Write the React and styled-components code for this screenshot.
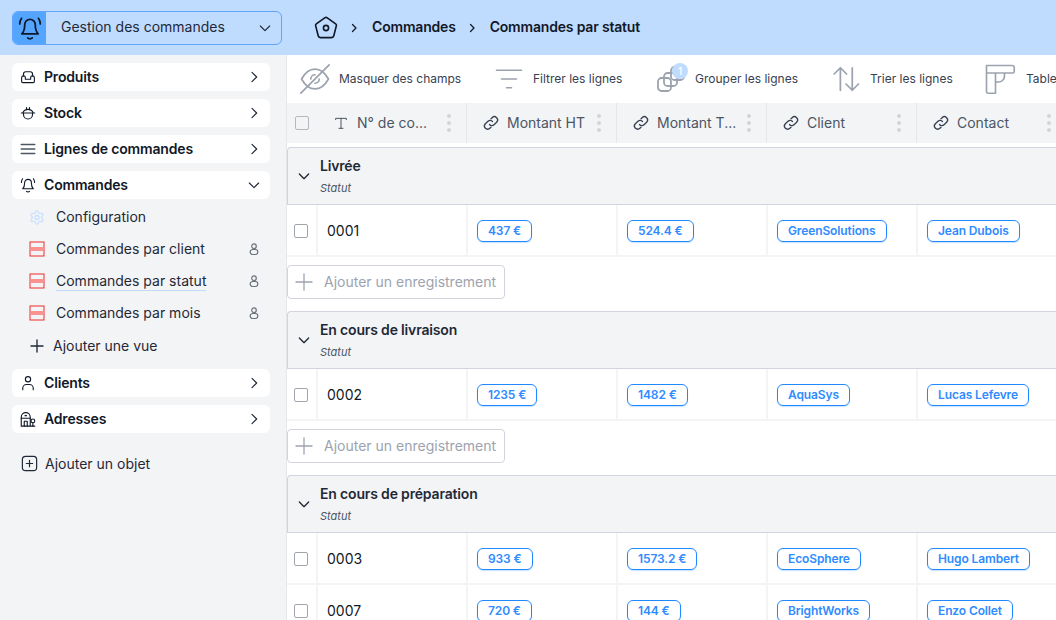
import React from "react";
import styled, {createGlobalStyle} from "styled-components";
import {Settings} from "lucide-react";

const GlobalStyle = createGlobalStyle`
  html, body { margin: 0; padding: 0; height: 100%; overflow: hidden; background: #fff; }
  body { font-family: Inter, "Liberation Sans", sans-serif; color: #111827; }
  * { box-sizing: border-box; }
`;

const Page = styled.div`
  width: 1056px;
  height: 620px;
  overflow: hidden;
  display: flex;
  flex-direction: column;
`;

const TopBar = styled.header`
  height: 55px;
  flex: none;
  background: #bfdcff;
  display: flex;
  align-items: center;
  padding-left: 12px;
`;

const AppSelect = styled.div`
  width: 270px;
  height: 34px;
  border: 1px solid #60a5fa;
  border-radius: 6px;
  display: flex;
  align-items: center;
  overflow: hidden;
  font-size: 14px;
  color: #1f2937;
`;

const AppIcon = styled.div`
  width: 33px;
  height: 100%;
  background: #53a5ff;
  display: flex;
  align-items: center;
  justify-content: center;
  margin-right: 15px;
`;

const AppName = styled.span`
  flex: 1;
  padding-bottom: 2px;
`;

const Crumbs = styled.nav`
  display: flex;
  align-items: center;
  margin-left: 30px;
  font-size: 14px;
  font-weight: 600;
  letter-spacing: -0.19px;
  color: #111827;
`;

const CrumbText = styled.span`
  padding-bottom: 2px;
`;

const CrumbSep = styled.span`
  display: flex;
  margin: 0 ${p => p.$right}px 0 ${p => p.$left}px;
`;

const Body = styled.div`
  flex: 1;
  display: flex;
  min-height: 0;
`;

const Sidebar = styled.aside`
  width: 287px;
  flex: none;
  background: #f3f4f6;
  border-right: 1px solid #e5e7eb;
  padding: 8px 16px 0 12px;
  display: flex;
  flex-direction: column;
`;

const NavItem = styled.div`
  height: 28px;
  background: #fff;
  border-radius: 6px;
  display: flex;
  align-items: center;
  padding: 0 8px;
  margin-bottom: 8px;
  font-size: 14px;
  font-weight: 600;
  letter-spacing: -0.17px;
  color: #111827;
`;

const NavIcon = styled.span`
  width: 18px;
  height: 18px;
  display: flex;
  margin: 0 7px 0 -1px;
`;

const Grow = styled.span`
  flex: 1;
  padding-bottom: 2px;
`;

const SubList = styled.div`
  margin-top: -6px;
  margin-bottom: 6px;
`;

const SubItem = styled.div`
  height: 32px;
  display: flex;
  align-items: center;
  padding: 0 10px 0 17px;
  font-size: 14px;
  color: #1f2937;
`;

const SubIcon = styled.span`
  width: 16px;
  height: 16px;
  display: flex;
  margin-right: 11px;
`;

const SubLabel = styled.span`
  flex: 1;
  padding-bottom: 2px;
`;

const ActiveLabel = styled.span`
  border-bottom: 1.5px solid #bfdcff;
  padding-bottom: 1px;
`;

const AddView = styled.div`
  height: 34px;
  display: flex;
  align-items: center;
  padding-left: 16px;
  font-size: 14px;
  color: #1f2937;
  gap: 7px;
`;

const AddViewLabel = styled.span`
  padding-bottom: 2px;
`;

const AddObject = styled.div`
  margin-top: 13px;
  padding-left: 8px;
  display: flex;
  align-items: center;
  gap: 6px;
  font-size: 14px;
  color: #1f2937;
`;

const Main = styled.main`
  flex: 1;
  min-width: 0;
  overflow: hidden;
  background: #fff;
`;

const Toolbar = styled.div`
  height: 48px;
  display: flex;
  align-items: center;
  font-size: 12px;
  color: #374151;
  white-space: nowrap;
`;

const Tool = styled.div`
  display: flex;
  align-items: center;
  flex: none;
  width: ${p => p.$width}px;
  padding-left: ${p => p.$pad || 0}px;
  gap: ${p => p.$gap}px;
`;

const ToolLabel = styled.span`
  padding-bottom: 2px;
`;

const ToolIcon = styled.span`
  position: relative;
  display: flex;
`;

const Badge = styled.span`
  position: absolute;
  top: -1px;
  right: -2px;
  width: 16px;
  height: 16px;
  border-radius: 50%;
  background: #bfdcff;
  color: #fff;
  font-size: 10px;
  font-weight: 500;
  display: flex;
  align-items: center;
  justify-content: center;
`;

const Row = styled.div`
  display: grid;
  grid-template-columns: 29px repeat(5, 150px);
  height: 52px;
  width: 780px;
`;

const HeadRow = styled.div`
  display: grid;
  grid-template-columns: 30px repeat(5, 150px);
  width: 780px;
  background: #f3f4f6;
  margin-bottom: 4px;
  height: 40px;
`;

const CheckCell = styled.div`
  display: flex;
  align-items: center;
  justify-content: center;
  border-bottom: ${p => (p.$head ? 0 : "2px solid #f3f4f6")};
`;

const Check = styled.span`
  width: 14px;
  height: 14px;
  margin: ${p => (p.$head ? 0 : "1px 1px 0 0")};
  border: 1.5px solid ${p => (p.$head ? "#b4b8c0" : "#a1a5ad")};
  border-radius: 2px;
  background: ${p => (p.$head ? "transparent" : "#fff")};
  display: block;
`;

const HeadCell = styled.div`
  border-right: 1px solid #e5e7eb;
  display: flex;
  align-items: center;
  padding: 0 15px 0 16px;
  font-size: 14px;
  color: #4b5563;
  gap: 8px;
`;

const HeadIcon = styled.span`
  display: flex;
  margin: 0 -1px;
`;

const HeadLabel = styled.span`
  flex: 1;
  white-space: nowrap;
  padding-bottom: 1px;
`;

const Dots = styled.span`
  display: flex;
  flex-direction: column;
  gap: 3px;
  i {
    width: 4px;
    height: 4px;
    border-radius: 50%;
    background: #d1d5db;
    display: block;
  }
`;

const GroupHead = styled.div`
  height: 58px;
  background: #f3f4f6;
  border: 1px solid #d1d5db;
  border-right: 0;
  border-radius: 4px 0 0 0;
  display: flex;
  align-items: center;
  padding-left: 8px;
`;

const GroupChevron = styled.span`
  display: flex;
`;

const GroupText = styled.div`
  margin-left: 8px;
  margin-top: -1px;
`;

const GroupTitle = styled.div`
  font-size: 14px;
  font-weight: 600;
  letter-spacing: -0.17px;
  line-height: 17px;
  color: #1f2937;
`;

const GroupSub = styled.div`
  font-size: 11px;
  font-style: italic;
  line-height: 14px;
  margin-top: 7px;
  color: #4b5563;
`;

const Cell = styled.div`
  border-left: 2px solid #f3f4f6;
  border-bottom: 2px solid #f3f4f6;
  display: flex;
  align-items: center;
  padding-left: 9px;
  font-size: 14px;
  color: #111827;
`;

const Tag = styled.span`
  height: 22px;
  margin-top: 1px;
  padding: 0 10px;
  border: 1px solid #2189ff;
  border-radius: 6px;
  box-shadow: 0 1px 1px rgba(33, 137, 255, 0.25);
  color: #2f8bff;
  font-size: 12px;
  font-weight: 600;
  letter-spacing: -0.12px;
  display: flex;
  align-items: center;
  white-space: nowrap;
`;

const AddRecord = styled.div`
  width: 218px;
  height: 34px;
  margin: 8px 0 12px;
  border: 1px solid #d1d5db;
  border-radius: 4px;
  display: flex;
  align-items: center;
  padding-left: 4px;
  gap: 8px;
  font-size: 14px;
  color: #9ca3af;
`;

const AddRecordLabel = styled.span`
  padding-bottom: 2px;
`;

const Svg = ({size = 18, vb = 24, sw = 1.5, color = "currentColor", children}) => (
    <svg width={size} height={size} viewBox={`0 0 ${vb} ${vb}`} fill="none" stroke={color}
         strokeWidth={sw} strokeLinecap="round" strokeLinejoin="round">
        {children}
    </svg>
);

const Bell = (props) => (
    <Svg {...props}>
        <path d="M5 17c1.500-1.500 2.500-4 2.500-8a4.500 4.500 0 0 1 9 0c0 4 1 6.500 2.500 8z"/>
        <path d="M10 20.500c1 1 3 1 4 0M3.200 8.500c0-1.800.5-3.300 1.600-4.800M20.800 8.500c0-1.800-.5-3.300-1.600-4.800"/>
    </Svg>
);

const Chevron = ({open, size = 16, sw = 1.7, color = "#1f2937"}) => (
    <Svg size={size} color={color} sw={sw}>
        <path d={open ? "M5 9l7 7 7-7" : "M9 5l7 7-7 7"}/>
    </Svg>
);

const Sofa = () => (
    <Svg>
        <path d="M6 10.500V8a3 3 0 0 1 3-3h6a3 3 0 0 1 3 3v2.500"/>
        <path d="M6 10.500a2.500 2.500 0 0 1 2.500 2.500v2h7v-2a2.500 2.500 0 0 1 5 0v5a1.500 1.500 0 0 1-1.500 1.500H5A1.500 1.500 0 0 1 3.500 18v-5A2.500 2.500 0 0 1 6 10.500z"/>
    </Svg>
);

const Helmet = () => (
    <Svg>
        <path d="M3 12h18M5 12a7.500 7.500 0 0 1 14 0M6 12v2a6 6 0 0 0 12 0v-2M10 4.800V8M14 4.800V8"/>
    </Svg>
);

const Menu = () => (
    <Svg color="#4b5563" sw={2}>
        <path d="M3 6h18M3 12h18M3 18h18"/>
    </Svg>
);

const Person = () => (
    <Svg>
        <circle cx="12" cy="7" r="3.500"/>
        <path d="M5 21v-2a5 5 0 0 1 5-5h4a5 5 0 0 1 5 5v2"/>
    </Svg>
);

const SharedIcon = () => (
    <svg width="12" height="12" viewBox="0 0 12 12" fill="none" stroke="#6b7280" strokeWidth="1.200">
        <circle cx="6" cy="3.200" r="2.300"/>
        <rect x="2.200" y="6.500" width="7.600" height="5" rx="2.500"/>
    </svg>
);

const Building = () => (
    <Svg>
        <path d="M3 21.500V9.500a6 6 0 0 1 12 0v12M3 21.500h18"/>
        <path d="M3 11h12M7 21.500V15h4v6.500M8 7.500h2"/>
        <circle cx="18.500" cy="14.500" r="2.500"/>
        <path d="M18.500 17v4.500"/>
    </Svg>
);

const ViewIcon = () => (
    <svg width="16" height="16" viewBox="0 0 16 16">
        <rect x="1" y="1" width="14" height="14" fill="none" stroke="#f02b2b"/>
        <rect x="1.500" y="6" width="13" height="4" fill="#fb9292"/>
    </svg>
);

const Plus = ({size = 18, color = "#1f2937", sw = 1.500}) => (
    <Svg size={size} color={color} sw={sw}>
        <path d="M12 4v16M4 12h16"/>
    </Svg>
);

const PlusBox = () => (
    <Svg size={19} color="#1f2937">
        <rect x="3" y="3" width="18" height="18" rx="4"/>
        <path d="M12 8v8M8 12h8"/>
    </Svg>
);

const Home = () => (
    <Svg size={28} color="#111827" sw={1.400}>
        <path d="M10.900 3.300a2 2 0 0 1 2.200 0l7.200 5.100a1.500 1.500 0 0 1 .6 1.600l-2.200 8.700a2 2 0 0 1-1.900 1.500H7.200a2 2 0 0 1-1.900-1.500L3.100 10a1.500 1.500 0 0 1 .6-1.600z"/>
        <circle cx="12" cy="12" r="2.200"/>
    </Svg>
);

const EyeOff = () => (
    <Svg size={34} color="#9ca3af" sw={1.200}>
        <path d="M2.500 12c2.500-4.500 5.800-7 9.500-7s7 2.500 9.500 7c-2.500 4.500-5.800 7-9.500 7s-7-2.500-9.500-7z"/>
        <path d="M9 12a3 3 0 0 1 3-3M15 12a3 3 0 0 1-3 3M2 22L22 2"/>
    </Svg>
);

const FilterIcon = () => (
    <Svg size={30} color="#9ca3af" sw={1.300}>
        <path d="M2 5h20M6 12h12M10 19h4"/>
    </Svg>
);

const GroupIcon = () => (
    <Svg size={30} vb={30} color="#9ca3af" sw={1.800}>
        <rect x="15" y="3" width="13" height="13" rx="3.500"/>
        <rect x="8" y="9" width="13" height="13" rx="3.500"/>
        <rect x="2" y="14" width="13" height="13" rx="3.500"/>
    </Svg>
);

const SortIcon = () => (
    <Svg size={30} color="#9ca3af" sw={1.400}>
        <path d="M7.500 21V3M2.500 8l5-5 5 5M17 3v18M12 16l5 5 5-5"/>
    </Svg>
);

const TableIcon = () => (
    <Svg size={36} color="#9ca3af" sw={1.100}>
        <path d="M3 3h17a1.500 1.500 0 0 1 1.500 1.500V7a1 1 0 0 1-1 1H9v13.500H4a1 1 0 0 1-1-1zM3 8h6M15 8v2a4 4 0 0 1-4 4H9"/>
    </Svg>
);

const TextIcon = () => (
    <Svg size={16} color="#4b5563">
        <path d="M4 7V5h16v2M12 5v15M9 20h6"/>
    </Svg>
);

const LinkIcon = () => (
    <Svg size={18} color="#374151" sw={1.700}>
        <path d="M10 14a4 4 0 0 0 6 .4l3.500-3.500a4.200 4.200 0 0 0-6-6L12 6.400"/>
        <path d="M14 10a4 4 0 0 0-6-.4l-3.500 3.500a4.200 4.200 0 0 0 6 6L12 17.600"/>
    </Svg>
);

const ThreeDots = () => <Dots><i/><i/><i/></Dots>;

const groups = [
    {
        name: "Livrée",
        rows: [["0001", "437 €", "524.4 €", "GreenSolutions", "Jean Dubois"]],
        add: true,
    },
    {
        name: "En cours de livraison",
        rows: [["0002", "1235 €", "1482 €", "AquaSys", "Lucas Lefevre"]],
        add: true,
    },
    {
        name: "En cours de préparation",
        rows: [
            ["0003", "933 €", "1573.2 €", "EcoSphere", "Hugo Lambert"],
            ["0007", "720 €", "144 €", "BrightWorks", "Enzo Collet"],
        ],
    },
];

const views = ["Commandes par client", "Commandes par statut", "Commandes par mois"];
const columns = ["Montant HT", "Montant T...", "Client", "Contact"];

const App = () => (
    <Page>
        <GlobalStyle/>
        <TopBar>
            <AppSelect>
                <AppIcon><Bell size={28} color="#111827"/></AppIcon>
                <AppName>Gestion des commandes</AppName>
                <CrumbSep $left={0} $right={8}><Chevron open/></CrumbSep>
            </AppSelect>
            <Crumbs>
                <Home/>
                <CrumbSep $left={8} $right={12}><Chevron size={12} sw={2.500} color="#111827"/></CrumbSep>
                <CrumbText>Commandes</CrumbText>
                <CrumbSep $left={10} $right={12}><Chevron size={12} sw={2.500} color="#111827"/></CrumbSep>
                <CrumbText>Commandes par statut</CrumbText>
            </Crumbs>
        </TopBar>
        <Body>
            <Sidebar>
                <NavItem><NavIcon><Sofa/></NavIcon><Grow>Produits</Grow><Chevron/></NavItem>
                <NavItem><NavIcon><Helmet/></NavIcon><Grow>Stock</Grow><Chevron/></NavItem>
                <NavItem><NavIcon><Menu/></NavIcon><Grow>Lignes de commandes</Grow><Chevron/></NavItem>
                <NavItem><NavIcon><Bell/></NavIcon><Grow>Commandes</Grow><Chevron open/></NavItem>
                <SubList>
                    <SubItem>
                        <SubIcon><Settings size={17} color="#c9e1ff" strokeWidth={2}/></SubIcon>
                        <SubLabel>Configuration</SubLabel>
                    </SubItem>
                    {views.map((view, index) => (
                        <SubItem key={view}>
                            <SubIcon><ViewIcon/></SubIcon>
                            <SubLabel>{index === 1 ? <ActiveLabel>{view}</ActiveLabel> : view}</SubLabel>
                            <SharedIcon/>
                        </SubItem>
                    ))}
                    <AddView><Plus sw={1.800}/><AddViewLabel>Ajouter une vue</AddViewLabel></AddView>
                </SubList>
                <NavItem><NavIcon><Person/></NavIcon><Grow>Clients</Grow><Chevron/></NavItem>
                <NavItem><NavIcon><Building/></NavIcon><Grow>Adresses</Grow><Chevron/></NavItem>
                <AddObject><PlusBox/>Ajouter un objet</AddObject>
            </Sidebar>
            <Main>
                <Toolbar>
                    <Tool $width={207} $pad={11} $gap={7}><EyeOff/><ToolLabel>Masquer des champs</ToolLabel></Tool>
                    <Tool $width={162} $gap={9}><FilterIcon/><ToolLabel>Filtrer les lignes</ToolLabel></Tool>
                    <Tool $width={175} $gap={9}>
                        <ToolIcon><GroupIcon/><Badge>1</Badge></ToolIcon>
                        <ToolLabel>Grouper les lignes</ToolLabel>
                    </Tool>
                    <Tool $width={151} $gap={9}><SortIcon/><ToolLabel>Trier les lignes</ToolLabel></Tool>
                    <Tool $width={100} $gap={8}><TableIcon/><ToolLabel>Table</ToolLabel></Tool>
                </Toolbar>
                <HeadRow>
                    <CheckCell $head><Check $head/></CheckCell>
                    <HeadCell><TextIcon/><HeadLabel>N° de co...</HeadLabel><ThreeDots/></HeadCell>
                    {columns.map(col => (
                        <HeadCell key={col}>
                            <HeadIcon><LinkIcon/></HeadIcon>
                            <HeadLabel>{col}</HeadLabel>
                            <ThreeDots/>
                        </HeadCell>
                    ))}
                </HeadRow>
                {groups.map(group => (
                    <div key={group.name}>
                        <GroupHead>
                            <GroupChevron><Chevron open size={16} sw={2}/></GroupChevron>
                            <GroupText>
                                <GroupTitle>{group.name}</GroupTitle>
                                <GroupSub>Statut</GroupSub>
                            </GroupText>
                        </GroupHead>
                        {group.rows.map(row => (
                            <Row key={row[0]}>
                                <CheckCell><Check/></CheckCell>
                                <Cell>{row[0]}</Cell>
                                {row.slice(1).map(value => <Cell key={value}><Tag>{value}</Tag></Cell>)}
                            </Row>
                        ))}
                        {group.add && (
                            <AddRecord>
                                <Plus size={24} color="#9ca3af" sw={1.300}/>
                                <AddRecordLabel>Ajouter un enregistrement</AddRecordLabel>
                            </AddRecord>
                        )}
                    </div>
                ))}
            </Main>
        </Body>
    </Page>
);

export default App;
